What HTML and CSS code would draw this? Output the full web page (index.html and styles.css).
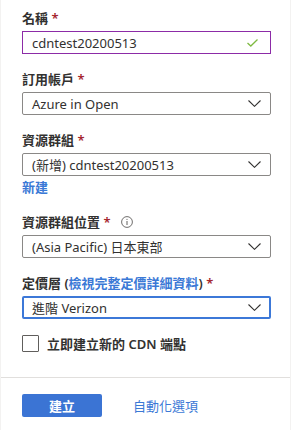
FILE: index.html
```html
<!DOCTYPE html>
<html lang="zh-Hant">
<head>
    <meta charset="UTF-8">
    <meta name="viewport" content="width=device-width, initial-scale=1.0">
    <title>建立 CDN 設定檔</title>
    <link rel="stylesheet" href="styles.css">
</head>
<body>

    <div class="blade">
        <div class="form">

            <div class="field">
                <div class="label">名稱 <span class="req">*</span></div>
                <div class="box box-valid">
                    <span class="value">cdntest20200513</span>
                    <svg class="check" width="11" height="8" viewBox="0 0 11 8">
                        <polyline points="0.5,4 3.8,7 10.5,0.5" fill="none" stroke="#7fba42" stroke-width="1.3"/>
                    </svg>
                </div>
            </div>

            <div class="field">
                <div class="label">訂用帳戶 <span class="req">*</span></div>
                <div class="box">
                    <span class="value">Azure in Open</span>
                    <svg class="chevron" width="13" height="7" viewBox="0 0 13 7">
                        <polyline points="0.5,0.5 6.5,6.3 12.5,0.5" fill="none" stroke="#323130" stroke-width="1.1"/>
                    </svg>
                </div>
            </div>

            <div class="field">
                <div class="label">資源群組 <span class="req">*</span></div>
                <div class="box">
                    <span class="value">(新增) cdntest20200513</span>
                    <svg class="chevron" width="13" height="7" viewBox="0 0 13 7">
                        <polyline points="0.5,0.5 6.5,6.3 12.5,0.5" fill="none" stroke="#323130" stroke-width="1.1"/>
                    </svg>
                </div>
                <a class="link link-strong" href="#">新建</a>
            </div>

            <div class="field">
                <div class="label">資源群組位置 <span class="req">*</span>
                    <svg class="info" width="12" height="12" viewBox="0 0 12 12">
                        <circle cx="6" cy="6" r="5.4" fill="none" stroke="#605e5c" stroke-width="0.9"/>
                        <line x1="6" y1="5" x2="6" y2="9" stroke="#605e5c" stroke-width="1"/>
                        <circle cx="6" cy="3.3" r="0.6" fill="#605e5c"/>
                    </svg>
                </div>
                <div class="box">
                    <span class="value">(Asia Pacific) 日本東部</span>
                    <svg class="chevron" width="13" height="7" viewBox="0 0 13 7">
                        <polyline points="0.5,0.5 6.5,6.3 12.5,0.5" fill="none" stroke="#323130" stroke-width="1.1"/>
                    </svg>
                </div>
            </div>

            <div class="field">
                <div class="label">定價層 (<a class="link" href="#">檢視完整定價詳細資料</a>) <span class="req">*</span></div>
                <div class="box box-focus">
                    <span class="value">進階 Verizon</span>
                    <svg class="chevron" width="13" height="7" viewBox="0 0 13 7">
                        <polyline points="0.5,0.5 6.5,6.3 12.5,0.5" fill="none" stroke="#323130" stroke-width="1.1"/>
                    </svg>
                </div>
            </div>

            <label class="checkbox-row">
                <span class="checkbox"></span>
                <span class="checkbox-text">立即建立新的 CDN 端點</span>
            </label>

        </div>

        <div class="footer">
            <button class="primary-btn">建立</button>
            <a class="link footer-link" href="#">自動化選項</a>
        </div>
    </div>

</body>
</html>
```

FILE: styles.css
```css
body {
    margin: 0;
    background: white;
    font-family: "Noto Sans", "Noto Sans CJK TC", sans-serif;
    font-size: 13px;
    color: #323130;
}
.blade {
    min-height: 430px;
    border-left: 1px solid #f3f2f1;
    border-right: 1px solid #f3f2f1;
    margin-right: 1px;
}
.form {
    padding: 9px 21px 25px 21px;
    border-bottom: 1px solid #e1dfdd;
}
.field {
    margin-bottom: 16px;
}
.label {
    display: flex;
    align-items: center;
    line-height: 18px;
    margin-bottom: 4px;
    font-weight: 600;
    white-space: pre;
}
.req {
    color: #a4262c;
}
.info {
    margin-left: 10px;
}
.box {
    box-sizing: border-box;
    width: 249px;
    height: 23px;
    display: flex;
    align-items: center;
    justify-content: space-between;
    padding: 0 9px 0 9px;
    border: 1px solid #8a8886;
    border-radius: 2px;
}
.box-valid {
    border-color: #8c2ba7;
    border-radius: 0;
}
.box-focus {
    border: 2px solid #3c78d8;
    padding: 0 8px;
}
.value {
    white-space: nowrap;
}
.check {
    margin-right: 3px;
}
.link {
    color: #3b79d6;
    text-decoration: none;
}
.link-strong {
    display: block;
    font-weight: 600;
    line-height: 20px;
    margin-top: 1px;
}
.checkbox-row {
    display: flex;
    align-items: center;
    height: 17px;
}
.checkbox {
    box-sizing: border-box;
    width: 17px;
    height: 17px;
    border: 1px solid #605e5c;
    border-radius: 1px;
}
.checkbox-text {
    margin-left: 8px;
    font-weight: 600;
}
.footer {
    display: flex;
    align-items: center;
    padding: 16px 21px;
}
.primary-btn {
    width: 80px;
    height: 23px;
    border: none;
    border-radius: 2px;
    background: #3b74d4;
    color: white;
    font-family: inherit;
    font-size: 13px;
    font-weight: 600;
    padding: 0;
}
.footer-link {
    margin-left: 31px;
}
```
